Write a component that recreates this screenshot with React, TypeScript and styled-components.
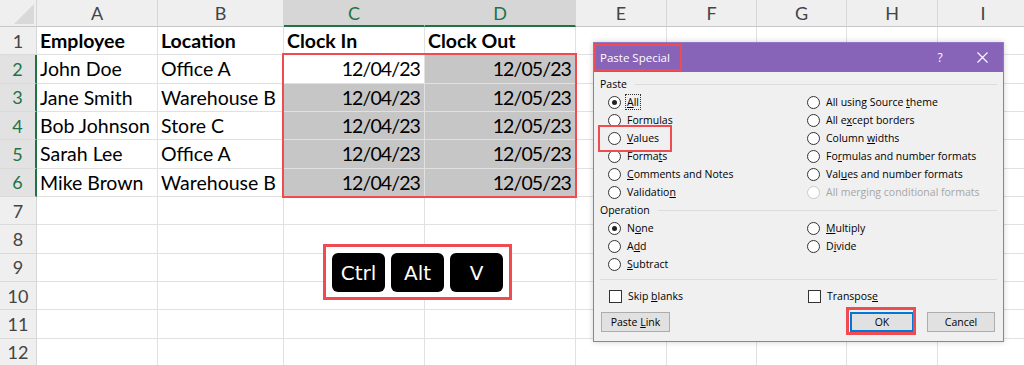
import React from 'react';
import styled, { createGlobalStyle, css } from 'styled-components';

const GlobalStyle = createGlobalStyle`
  html, body { margin: 0; padding: 0; background: #fff; }
  body { overflow: hidden; }
`;

const RED = '#ef4b50';
const GREEN = '#217346';

const Page = styled.div`
  position: relative;
  width: 1024px;
  height: 365px;
  overflow: hidden;
  background: #fff;
  font-family: Lato, 'Liberation Sans', sans-serif;
`;

const Sheet = styled.div`
  display: grid;
  grid-template-columns: 37px 121px 126px 141px 151px 91px 90px 90px 91px 91px;
  grid-template-rows: 27px repeat(12, 28.33px);
`;

const Corner = styled.div`
  background: #efefef;
  border-right: 1px solid #d6d6d6;
  border-bottom: 1px solid #c6c6c6;
  box-sizing: border-box;
  display: flex;
  align-items: flex-end;
  justify-content: flex-end;
  padding: 0 2px 2px 0;
`;

const ColHead = styled.div<{ $active?: boolean }>`
  box-sizing: border-box;
  background: ${(p) => (p.$active ? '#d6d6d6' : '#efefef')};
  color: ${(p) => (p.$active ? GREEN : '#444')};
  border-right: 1px solid #d6d6d6;
  border-bottom: ${(p) => (p.$active ? `2px solid ${GREEN}` : '1px solid #c6c6c6')};
  display: flex;
  align-items: center;
  justify-content: center;
  font-size: 18px;
`;

const RowHead = styled.div<{ $active?: boolean }>`
  box-sizing: border-box;
  background: ${(p) => (p.$active ? '#e2e2e2' : '#efefef')};
  color: ${(p) => (p.$active ? GREEN : '#444')};
  border-right: ${(p) => (p.$active ? `2px solid ${GREEN}` : '1px solid #d6d6d6')};
  border-bottom: 1px solid #dadada;
  display: flex;
  align-items: center;
  justify-content: center;
  font-size: 18px;
`;

const Cell = styled.div<{ $sel?: boolean; $right?: boolean; $bold?: boolean }>`
  box-sizing: border-box;
  background: ${(p) => (p.$sel ? '#c6c6c6' : '#fff')};
  border-right: 1px solid #e1e1e1;
  border-bottom: 1px solid #e1e1e1;
  display: flex;
  align-items: center;
  justify-content: ${(p) => (p.$right ? 'flex-end' : 'flex-start')};
  padding: 0 4px 0 3px;
  font-size: 19.5px;
  font-weight: ${(p) => (p.$bold ? 700 : 400)};
  letter-spacing: ${(p) => (p.$right ? '-0.9px' : '0')};
  color: #000;
  white-space: nowrap;
  overflow: hidden;
`;

const Mark = styled.div<{ $x: number; $y: number; $w: number; $h: number; $t?: number }>`
  position: absolute;
  left: ${(p) => p.$x}px;
  top: ${(p) => p.$y}px;
  width: ${(p) => p.$w}px;
  height: ${(p) => p.$h}px;
  border: ${(p) => p.$t ?? 2}px solid ${RED};
  box-sizing: border-box;
  pointer-events: none;
`;

/* Keyboard shortcut */
const KeysBox = styled.div`
  position: absolute;
  left: 323px;
  top: 244px;
  width: 189px;
  height: 56px;
  box-sizing: border-box;
  border: 3px solid ${RED};
  background: #fff;
  display: flex;
  gap: 6px;
  padding: 6px 0 0 6px;
`;

const KeyCap = styled.div`
  width: 53px;
  height: 39px;
  border-radius: 6px;
  background: #000;
  color: #fff;
  display: flex;
  align-items: center;
  justify-content: center;
  font-family: 'DejaVu Sans', sans-serif;
  font-size: 20px;
  font-weight: 400;
`;

/* Dialog */
const Dialog = styled.div`
  position: absolute;
  left: 593px;
  top: 42px;
  width: 411px;
  height: 300px;
  box-sizing: border-box;
  border: 1px solid #9277c4;
  background: #f0f0f0;
  box-shadow: 0 0 6px rgba(0, 0, 0, 0.18);
  display: flex;
  flex-direction: column;
  font-family: 'Open Sans', 'Noto Sans', sans-serif;
  font-size: 10.5px;
  color: #000;
`;

const TitleBar = styled.div`
  height: 29px;
  background: #8764b8;
  color: #fff;
  display: flex;
  align-items: center;
  padding: 0 0 0 6px;
  font-size: 11.5px;
  flex: none;
`;

const TitleText = styled.div`
  flex: 1;
`;

const TitleBtn = styled.div`
  width: 42px;
  height: 29px;
  display: flex;
  align-items: center;
  justify-content: center;
  font-size: 12px;
`;

const Body = styled.div`
  padding: 3px 6px 0 6px;
  display: flex;
  flex-direction: column;
`;

const SectionLabel = styled.div`
  height: 18px;
  display: flex;
  align-items: center;
  gap: 8px;
  &::after {
    content: '';
    flex: 1;
    border-top: 1px solid #dcdcdc;
  }
`;

const OptionGrid = styled.div<{ $rows: number }>`
  display: grid;
  grid-template-columns: 199px 1fr;
  grid-auto-flow: column;
  grid-template-rows: repeat(${(p) => p.$rows}, 18px);
  padding-left: 8px;
`;

const Option = styled.div<{ $disabled?: boolean }>`
  display: flex;
  align-items: center;
  gap: 6px;
  color: ${(p) => (p.$disabled ? '#a6a6a6' : '#000')};
  white-space: nowrap;
`;

const Radio = styled.span<{ $checked?: boolean; $disabled?: boolean }>`
  width: 13px;
  height: 13px;
  box-sizing: border-box;
  border-radius: 50%;
  border: 1px solid ${(p) => (p.$disabled ? '#cacaca' : '#333')};
  background: #fff;
  flex: none;
  position: relative;
  ${(p) =>
    p.$checked &&
    css`
      &::after {
        content: '';
        position: absolute;
        left: 3px;
        top: 3px;
        width: 5px;
        height: 5px;
        border-radius: 50%;
        background: #222;
      }
    `}
`;

const Check = styled.span`
  width: 13px;
  height: 13px;
  box-sizing: border-box;
  border: 1px solid #333;
  background: #fff;
  flex: none;
`;

const Focus = styled.span`
  outline: 1px dotted #333;
  outline-offset: 0px;
  padding: 0 1px;
  margin-left: -1px;
`;

const U = styled.span`
  text-decoration: underline;
  text-underline-offset: 1px;
`;

const Separator = styled.div`
  height: 0;
  border-top: 1px solid #dcdcdc;
  margin: 6px 0 7px 0;
`;

const CheckRow = styled.div`
  display: grid;
  grid-template-columns: 199px 1fr;
  height: 18px;
  padding-left: 9px;
`;

const ButtonRow = styled.div`
  display: flex;
  margin-top: 7px;
  padding-left: 1px;
`;

const Button = styled.div<{ $w: number; $default?: boolean }>`
  width: ${(p) => p.$w}px;
  height: 20px;
  box-sizing: border-box;
  background: #e1e1e1;
  border: 1px solid ${(p) => (p.$default ? '#0078d7' : '#adadad')};
  ${(p) => p.$default && css`box-shadow: inset 0 0 0 1px #0078d7;`}
  display: flex;
  align-items: center;
  justify-content: center;
`;

const Spacer = styled.div<{ $w: number }>`
  width: ${(p) => p.$w}px;
  flex: none;
`;

const cols = ['A', 'B', 'C', 'D', 'E', 'F', 'G', 'H', 'I'];
const data: string[][] = [
  ['Employee', 'Location', 'Clock In', 'Clock Out'],
  ['John Doe', 'Office A', '12/04/23', '12/05/23'],
  ['Jane Smith', 'Warehouse B', '12/04/23', '12/05/23'],
  ['Bob Johnson', 'Store C', '12/04/23', '12/05/23'],
  ['Sarah Lee', 'Office A', '12/04/23', '12/05/23'],
  ['Mike Brown', 'Warehouse B', '12/04/23', '12/05/23'],
];

function Label({ text, u }: { text: string; u: number }) {
  if (u < 0) return <>{text}</>;
  return (
    <>
      {text.slice(0, u)}
      <U>{text[u]}</U>
      {text.slice(u + 1)}
    </>
  );
}

type Opt = { t: string; u: number; checked?: boolean; disabled?: boolean; focus?: boolean } | null;

const pasteOpts: Opt[] = [
  { t: 'All', u: 0, checked: true, focus: true },
  { t: 'Formulas', u: 0 },
  { t: 'Values', u: 0 },
  { t: 'Formats', u: 5 },
  { t: 'Comments and Notes', u: 0 },
  { t: 'Validation', u: 9 },
  { t: 'All using Source theme', u: 17 },
  { t: 'All except borders', u: 5 },
  { t: 'Column widths', u: 7 },
  { t: 'Formulas and number formats', u: 2 },
  { t: 'Values and number formats', u: 3 },
  { t: 'All merging conditional formats', u: -1, disabled: true },
];

const opOpts: Opt[] = [
  { t: 'None', u: 1, checked: true },
  { t: 'Add', u: 1 },
  { t: 'Subtract', u: 0 },
  { t: 'Multiply', u: 0 },
  { t: 'Divide', u: 1 },
  null,
];

function Options({ list }: { list: Opt[] }) {
  return (
    <OptionGrid $rows={list.length / 2}>
      {list.map((o, i) =>
        o ? (
          <Option key={i} $disabled={o.disabled}>
            <Radio $checked={o.checked} $disabled={o.disabled} />
            {o.focus ? (
              <Focus>
                <Label text={o.t} u={o.u} />
              </Focus>
            ) : (
              <span>
                <Label text={o.t} u={o.u} />
              </span>
            )}
          </Option>
        ) : (
          <div key={i} />
        )
      )}
    </OptionGrid>
  );
}

function CornerTriangle() {
  return (
    <svg width="20" height="20" viewBox="0 0 20 20">
      <polygon points="20,0 20,20 0,20" fill="#d9d9d9" />
    </svg>
  );
}

function CloseIcon() {
  return (
    <svg width="11" height="11" viewBox="0 0 11 11">
      <path d="M0.5 0.5 L10.5 10.5 M10.5 0.5 L0.5 10.5" stroke="#fff" strokeWidth="1.1" fill="none" />
    </svg>
  );
}

export default function App() {
  const rows = Array.from({ length: 12 }, (_, i) => i);
  return (
    <Page>
      <GlobalStyle />
      <Sheet>
        <Corner>
          <CornerTriangle />
        </Corner>
        {cols.map((c) => (
          <ColHead key={c} $active={c === 'C' || c === 'D'}>
            {c}
          </ColHead>
        ))}
        {rows.map((r) => (
          <React.Fragment key={r}>
            <RowHead $active={r >= 1 && r <= 5}>{r + 1}</RowHead>
            {cols.map((c, ci) => {
              const v = data[r]?.[ci] ?? '';
              const sel = r >= 1 && r <= 5 && (ci === 2 || ci === 3) && !(r === 1 && ci === 2);
              return (
                <Cell key={c} $sel={sel} $right={r >= 1 && ci >= 2} $bold={r === 0}>
                  {v}
                </Cell>
              );
            })}
          </React.Fragment>
        ))}
      </Sheet>

      <Mark $x={282} $y={53} $w={295} $h={145} />

      <KeysBox>
        <KeyCap>Ctrl</KeyCap>
        <KeyCap>Alt</KeyCap>
        <KeyCap>V</KeyCap>
      </KeysBox>

      <Dialog>
        <TitleBar>
          <TitleText>Paste Special</TitleText>
          <TitleBtn>?</TitleBtn>
          <TitleBtn>
            <CloseIcon />
          </TitleBtn>
        </TitleBar>
        <Body>
          <SectionLabel>Paste</SectionLabel>
          <Options list={pasteOpts} />
          <SectionLabel>Operation</SectionLabel>
          <Options list={opOpts} />
          <Separator />
          <CheckRow>
            <Option>
              <Check />
              <span>
                Skip <U>b</U>lanks
              </span>
            </Option>
            <Option>
              <Check />
              <span>
                Transpos<U>e</U>
              </span>
            </Option>
          </CheckRow>
          <ButtonRow>
            <Button $w={69}>
              <span>
                Paste <U>L</U>ink
              </span>
            </Button>
            <Spacer $w={180} />
            <Button $w={64} $default>
              OK
            </Button>
            <Spacer $w={13} />
            <Button $w={68}>Cancel</Button>
          </ButtonRow>
        </Body>
      </Dialog>

      <Mark $x={594} $y={44} $w={88} $h={27} />
      <Mark $x={598} $y={125} $w={74} $h={27} />
      <Mark $x={846} $y={307} $w={70} $h={28} $t={3} />
    </Page>
  );
}
